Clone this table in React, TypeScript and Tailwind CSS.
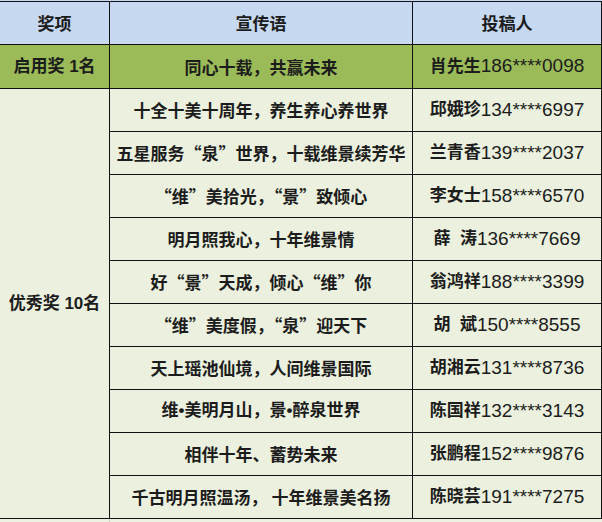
const rows: [string, string, string][] = [
  ["十全十美十周年，养生养心养世界", "邱娥珍", "134****6997"],
  ["五星服务“泉”世界，十载维景续芳华", "兰青香", "139****2037"],
  ["“维”美拾光，“景”致倾心", "李女士", "158****6570"],
  ["明月照我心，十年维景情", "薛  涛", "136****7669"],
  ["好“景”天成，倾心“维”你", "翁鸿祥", "188****3399"],
  ["“维”美度假，“泉”迎天下", "胡  斌", "150****8555"],
  ["天上瑶池仙境，人间维景国际", "胡湘云", "131****8736"],
  ["维•美明月山，景•醉泉世界", "陈国祥", "132****3143"],
  ["相伴十年、蓄势未来", "张鹏程", "152****9876"],
  ["千古明月照温汤， 十年维景美名扬", "陈晓芸", "191****7275"],
];

const cell = "flex items-center justify-center whitespace-pre";
const cjk = { fontFamily: '"Noto Sans CJK SC", sans-serif' };
const latin = { fontFamily: '"Liberation Sans", "Noto Sans CJK SC", sans-serif' };

function Person({ name, num }: { name: string; num: string }) {
  return (
    <>
      <span className="font-semibold">{name}</span>
      <span className="font-normal text-[19px]">{num}</span>
    </>
  );
}

export default function App() {
  return (
    <div
      className="w-[602px] h-[522px] bg-[#ecf1e2] text-[17px] text-[#1c1c1c] font-semibold overflow-hidden"
      style={latin}
    >
      <div className="h-px bg-[#c6d9f0]" />
      <div className="grid grid-cols-[109px_302px_188px] grid-rows-[42px_43px_repeat(10,42px)] gap-px bg-[#111] border-t border-r border-b border-[#111]">
        <div className={`${cell} bg-[#c6d9f0]`} style={cjk}>奖项</div>
        <div className={`${cell} bg-[#c6d9f0]`} style={cjk}>宣传语</div>
        <div className={`${cell} bg-[#c6d9f0]`} style={cjk}>投稿人</div>

        <div className={`${cell} bg-[#9bbb59]`}>启用奖 1名</div>
        <div className={`${cell} bg-[#9bbb59]`} style={cjk}>同心十载，共赢未来</div>
        <div className={`${cell} bg-[#9bbb59]`}>
          <Person name="肖先生" num="186****0098" />
        </div>

        <div className={`${cell} bg-[#ebf1de] row-span-10`}>优秀奖 10名</div>
        {rows.map(([slogan, name, num]) => (
          <div key={num} className="contents">
            <div
              className={`${cell} bg-[#ebf1de]`}
              style={slogan.includes("•") ? latin : cjk}
            >
              {slogan}
            </div>
            <div className={`${cell} bg-[#ebf1de]`}>
              <Person name={name} num={num} />
            </div>
          </div>
        ))}
      </div>
      <div className="flex h-full">
        <div className="w-[109px]" />
        <div className="w-px bg-[#c9cdc2]" />
      </div>
    </div>
  );
}
